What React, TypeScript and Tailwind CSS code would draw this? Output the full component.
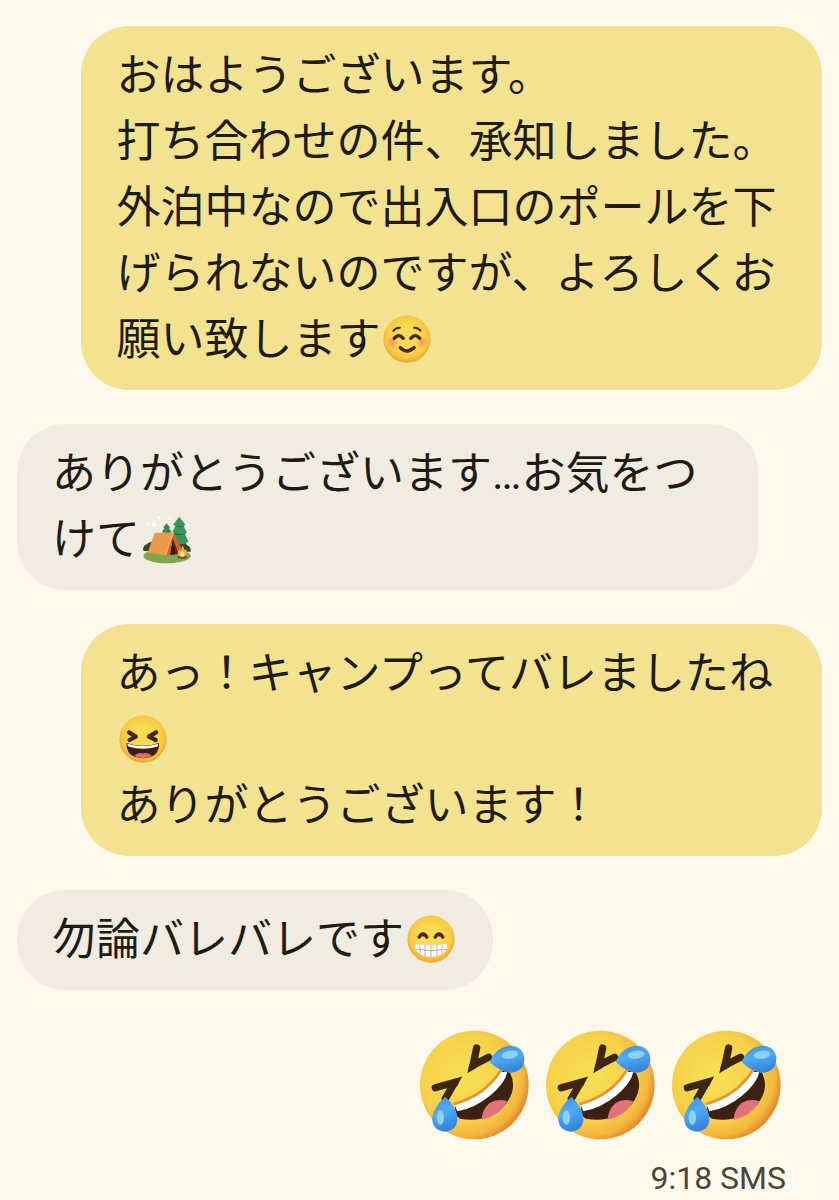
import React from 'react';

const EMOJI_CLASS = 'inline-block w-[54px] h-[66px] align-top';

// Shared gradients, referenced by every face
const Gradients = () => (
  <svg className="absolute w-0 h-0" aria-hidden="true">
    <defs>
      <radialGradient id="face" cx="0.5" cy="0.45" r="0.55">
        <stop offset="0.4" stopColor="#fbdb56" />
        <stop offset="0.8" stopColor="#f8c940" />
        <stop offset="1" stopColor="#eba336" />
      </radialGradient>
      <radialGradient id="blush">
        <stop offset="0" stopColor="#f4815f" stopOpacity="0.8" />
        <stop offset="1" stopColor="#f4815f" stopOpacity="0" />
      </radialGradient>
      <radialGradient id="rofl" cx="0.4" cy="0.42" r="0.62">
        <stop offset="0.1" stopColor="#f8de52" />
        <stop offset="0.65" stopColor="#f7d04a" />
        <stop offset="0.88" stopColor="#f2b73e" />
        <stop offset="1" stopColor="#e38a2b" />
      </radialGradient>
      <linearGradient id="tear" x1="0" y1="0" x2="0.3" y2="1">
        <stop offset="0" stopColor="#3f8fe0" />
        <stop offset="0.5" stopColor="#4fabf5" />
        <stop offset="1" stopColor="#3585dc" />
      </linearGradient>
    </defs>
  </svg>
);

const Smile = () => (
  <svg viewBox="0 0 128 128" className={EMOJI_CLASS} role="img" aria-label="smiling face">
    <circle cx="64" cy="62" r="56" fill="url(#face)" />
    <circle cx="29" cy="69" r="15" fill="url(#blush)" />
    <circle cx="99" cy="69" r="15" fill="url(#blush)" />
    <g fill="none" stroke="#45290f" strokeLinecap="round">
      <path d="M32 42Q37 35 47 35M81 35Q91 35 96 42" strokeWidth="5" />
      <path d="M34 60Q44 47 55 60M73 60Q84 47 94 60" strokeWidth="8" />
      <path d="M48 82Q64 98 81 82" strokeWidth="8" />
    </g>
  </svg>
);

const Laugh = () => (
  <svg viewBox="0 0 128 128" className={EMOJI_CLASS} role="img" aria-label="laughing face">
    <circle cx="64" cy="62" r="56" fill="url(#face)" />
    <g fill="none" stroke="#45290f" strokeWidth="10" strokeLinecap="round" strokeLinejoin="round">
      <path d="M31 46L47 56L32 64" />
      <path d="M95 46L78 56L94 64" />
    </g>
    <path d="M25 71Q64 84 102 71Q104 106 64 107Q23 106 25 71Z" fill="#3c1f10" />
    <path d="M43 101Q53 92 64 96Q75 92 85 101Q77 107 64 107Q51 107 43 101Z" fill="#e5696c" />
    <path d="M27 73Q64 84 100 73Q101 78 97 80Q64 89 31 80Q26 78 27 73Z" fill="#fff" />
  </svg>
);

const Grin = () => (
  <svg viewBox="0 0 128 128" className={EMOJI_CLASS} role="img" aria-label="grinning face">
    <circle cx="64" cy="62" r="56" fill="url(#face)" />
    <path d="M35 58Q45 42 55 58Q45 53 35 58ZM73 58Q83 42 93 58Q83 53 73 58Z" fill="#8a4a12" />
    <g fill="none" stroke="#45290f" strokeWidth="8" strokeLinecap="round">
      <path d="M36 57Q45 42 54 57M74 57Q83 42 92 57" />
    </g>
    <path d="M27 73Q64 79 101 73Q104 79 100 87Q90 104 64 104Q38 104 28 87Q24 79 27 73Z" fill="#fff" stroke="#d9cfb8" strokeWidth="1" />
    <path d="M28 86Q64 93 100 86M50 76V102M64 77V104M78 76V102M37 75L39 96M91 75L89 96" fill="none" stroke="#a9a6a3" strokeWidth="2" />
  </svg>
);

const Camping = () => (
  <svg viewBox="0 0 128 128" className={EMOJI_CLASS} role="img" aria-label="camping">
    <g fill="#fff">
      <circle cx="16" cy="42" r="2" />
      <circle cx="33" cy="27" r="5" />
      <circle cx="46" cy="11" r="3" />
      <circle cx="20" cy="27" r="2" />
      <circle cx="70" cy="14" r="2" />
      <circle cx="115" cy="27" r="3" />
      <circle cx="113" cy="48" r="2" />
    </g>
    <path d="M8 90Q5 78 16 74Q25 64 40 72L96 70Q108 66 111 76Q121 79 120 92Z" fill="#37471f" />
    <ellipse cx="64" cy="102" rx="56" ry="17" fill="#7fa64c" />
    <path d="M59 44H67V54H59Z" fill="#5d4026" />
    <path d="M63 24L71 34L69 36L75 45Q63 52 52 45L58 36L55 34Z" fill="#36894d" />
    <path d="M88 64H98V82H88Z" fill="#5d4026" />
    <path d="M93 9L107 27L103 30L111 46L106 48L115 68Q95 80 74 68L81 48L77 45L84 30L79 27Z" fill="#3a955a" />
    <path d="M79 27Q93 36 107 27L103 31Q93 36 84 31ZM77 45Q93 54 111 46L106 50Q93 56 81 50Z" fill="#1f6b40" />
    <path d="M80 46L104 96L62 100Z" fill="#d8622a" />
    <path d="M78 61L92 97L72 99Z" fill="#52301d" />
    <path d="M78 61L83 98L72 99Z" fill="#2f1b14" />
    <path d="M34 50Q35 47 39 47L80 46L62 100L21 94Q18 93 20 89Z" fill="#eb9a4c" />
    <path d="M80 46L62 100L58 99L76 46Z" fill="#f3ac5b" />
    <ellipse cx="100" cy="105" rx="11" ry="4" fill="#755036" />
    <path d="M91 101Q88 92 93 86Q95 91 98 87Q98 81 101 77Q105 85 106 88Q109 87 109 84Q113 94 108 101Q100 108 91 101Z" fill="#f7a83d" />
    <path d="M95 101Q95 94 100 89Q105 95 105 101Q100 106 95 101Z" fill="#fff3b0" />
  </svg>
);

const Rofl = () => (
  <svg viewBox="6 0 378 378" className="w-[126px] h-[126px]" role="img" aria-label="rolling on the floor laughing">
    <circle cx="193" cy="195" r="163" fill="url(#rofl)" />
    <path d="M136 254Q227 226 278 152L300 158Q324 205 286 254Q232 311 150 296Q132 288 136 254Z" fill="#3c2112" />
    <path d="M215 299Q216 270 238 250Q262 234 292 244Q270 287 215 299Z" fill="#e4727a" />
    <path d="M134 254Q226 230 272 156L292 156Q285 190 240 227Q195 264 142 274Z" fill="#fff" />
    <path d="M134 251Q224 226 271 153" fill="none" stroke="#e8952c" strokeWidth="8" strokeLinecap="round" />
    <g fill="none" stroke="#3e2712" strokeWidth="22" strokeLinecap="round">
      <path d="M200 84L189 136L236 112" />
      <path d="M76 203L134 187L106 236" />
    </g>
    <path d="M172 160L178 132L202 142ZM151 173L126 179L142 199Z" fill="#3e2712" />
    <path d="M239 126Q254 85 296 77Q340 77 343 115Q343 155 303 158Q272 157 239 126Z" fill="url(#tear)" />
    <path d="M106 230Q142 262 142 298Q140 333 104 335Q68 332 66 295Q70 261 106 230Z" fill="url(#tear)" />
    <ellipse cx="300" cy="104" rx="25" ry="12" transform="rotate(-8 300 104)" fill="#8bd2f8" />
    <ellipse cx="91" cy="293" rx="11" ry="22" fill="#8bd2f8" />
  </svg>
);

interface BubbleProps {
  sent?: boolean;
  children: React.ReactNode;
}

const Bubble = ({ sent = false, children }: BubbleProps) => (
  <div
    className={`max-w-[92%] rounded-[48px] px-[35px] py-[17px] text-[44px] leading-[66px] ${
      sent ? 'self-end bg-[#f3e391]' : 'self-start bg-[#f0ece2]'
    }`}
  >
    {children}
  </div>
);

export default function App() {
  return (
    <main
      lang="ja"
      className="min-h-screen bg-[#fef9ed] text-[#1f1b10] pt-[26px] px-[17px] font-['Roboto','Noto_Sans_CJK_JP',sans-serif]"
    >
      <Gradients />
      <div className="flex flex-col gap-[34px]">
        <Bubble sent>
          <p>おはようございます。</p>
          <p>打ち合わせの件、承知しました。</p>
          <p>
            外泊中なので出入口のポールを下げられないのですが、よろしくお願い致します
            <Smile />
          </p>
        </Bubble>
        <Bubble>
          <p>
            ありがとうございます…お気をつけて
            <Camping />
          </p>
        </Bubble>
        <Bubble sent>
          <p>
            あっ！キャンプってバレましたね
            <Laugh />
          </p>
          <p>ありがとうございます！</p>
        </Bubble>
        <Bubble>
          <p>
            勿論バレバレです
            <Grin />
          </p>
        </Bubble>
      </div>

      <div className="mt-[30px] pr-8 flex flex-col items-end">
        <div className="flex">
          <Rofl />
          <Rofl />
          <Rofl />
        </div>
        <p className="mt-3 pr-1 text-[32px] leading-10 text-[#4a4639]">9:18 SMS</p>
      </div>
    </main>
  );
}
